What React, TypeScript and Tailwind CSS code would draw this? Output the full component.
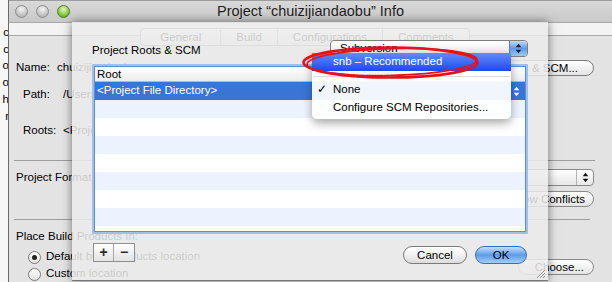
import React from 'react';

const font = "font-['Liberation_Sans',Arial,sans-serif]";

function Arrows({ color = '#111' }: { color?: string }) {
  return (
    <svg width="7" height="11" viewBox="0 0 7 11">
      <path d="M3.5 0.8 L6.3 4.2 H0.7Z" fill={color} />
      <path d="M3.5 10.2 L6.3 6.8 H0.7Z" fill={color} />
    </svg>
  );
}

function TrafficLight({ green }: { green?: boolean }) {
  return (
    <div
      className={
        green
          ? 'w-[13px] h-[13px] rounded-full border border-[#4f7f2a] bg-[radial-gradient(circle_at_50%_30%,#e2f8b8,#8fcb4c_55%,#4c9420)]'
          : 'w-[13px] h-[13px] rounded-full border border-[#8d8d8d] bg-[radial-gradient(circle_at_50%_30%,#f4f4f4,#c8c8c8_55%,#a4a4a4)]'
      }
    />
  );
}

function Radio({ checked }: { checked?: boolean }) {
  return (
    <div className="w-[13px] h-[13px] rounded-full border border-[#7b7b7b] bg-gradient-to-b from-white to-[#e2e2e2] flex items-center justify-center">
      {checked && <div className="w-[5px] h-[5px] rounded-full bg-[#222]" />}
    </div>
  );
}

export default function App() {
  const rows = Array.from({ length: 8 });

  return (
    <div className={`relative w-[612px] h-[282px] overflow-hidden flex bg-[#f7f7f7] text-black ${font}`}>
      {/* window behind, only a sliver */}
      <div className="w-[8px] flex flex-col items-end pt-[24px] text-[11.5px] leading-[16.7px] overflow-hidden">
        {['c', 'c', 'o', 'o', 'h', 'r'].map((c, i) => (
          <span key={i} className="-mr-[1px]">{c}</span>
        ))}
      </div>
      <div className="w-px bg-[#6a6a6a]" />

      {/* project info window */}
      <div className="flex-1 flex flex-col bg-[#e3e3e3]">
        <div className="h-[22px] flex items-center border-t border-[#9c9c9c] bg-gradient-to-b from-[#d8d8d8] to-[#c9c9c9]">
          <div className="flex gap-[8px] pl-[6px] w-[61px]">
            <TrafficLight />
            <TrafficLight />
            <TrafficLight green />
          </div>
          <div className="flex-1 text-center text-[14.5px] text-[#1e1e1e] whitespace-nowrap">
            Project “chuizijiandaobu” Info
          </div>
          <div className="w-[61px]" />
        </div>
        <div className="h-[20px] bg-[#f3f3f3] border-b border-[#a6a6a6] border-t border-t-[#a8a8a8]" />

        <div className="flex flex-col pl-[7px] pr-[18px] text-[11.5px]">
          {/* tabs */}
          <div className="-mt-[8px] h-[18px] flex justify-center">
            <div className="flex h-[18px] rounded-[4px] border border-[#8c8c8c] bg-gradient-to-b from-white to-[#e6e6e6] text-[11.5px] leading-[16px]">
              <div className="px-[19px] border-r border-[#a0a0a0]">General</div>
              <div className="px-[15px] border-r border-[#a0a0a0]">Build</div>
              <div className="px-[15px] border-r border-[#a0a0a0]">Configurations</div>
              <div className="px-[15px]">Comments</div>
            </div>
          </div>

          <div className="mt-[14px] h-[16px] flex items-center justify-between">
            <div className="flex whitespace-nowrap">
              <span className="w-[41px]">Name:</span>
              <span>chuizijiandaobu</span>
            </div>
            <div className="h-[16px] rounded-full border border-[#7d7d7d] bg-gradient-to-b from-white to-[#e4e4e4] pl-[14px] pr-[15px] leading-[14px] whitespace-nowrap">
              Edit Roots &amp; SCM...
            </div>
          </div>
          <div className="mt-[11px] h-[15px] flex items-center pl-[7px] whitespace-nowrap">
            <span className="w-[40px]">Path:</span>
            <span>/Users/apple/Desktop/chuizijiandaobu</span>
          </div>
          <div className="mt-[21px] h-[15px] flex items-center pl-[7px] whitespace-nowrap">
            <span className="w-[40px]">Roots:</span>
            <span>&lt;Project File Directory&gt;</span>
          </div>
          <div className="mt-[22px] -ml-[2px] mr-[-1px] border-t border-[#9e9e9e]" />

          <div className="mt-[8px] h-[17px] flex items-center justify-between">
            <span>Project Format:</span>
            <div className="w-[200px] h-[17px] rounded-[4px] border border-[#8a8a8a] bg-gradient-to-b from-white to-[#e8e8e8] flex items-center">
              <span className="flex-1 pl-[8px] leading-[15px]">Xcode 3.1-compatible</span>
              <div className="w-[17px] h-full border-l border-[#b4b4b4] flex items-center justify-center">
                <Arrows />
              </div>
            </div>
          </div>
          <div className="mt-[5px] h-[16px] flex justify-end">
            <div className="h-[16px] rounded-full border border-[#8a8a8a] bg-gradient-to-b from-white to-[#e4e4e4] pl-[14px] pr-[8px] leading-[14px] whitespace-nowrap">
              Show Conflicts
            </div>
          </div>
          <div className="mt-[12px] -ml-[2px] mr-[4px] border-t border-[#9e9e9e]" />

          <div className="mt-[9px] h-[15px] leading-[15px] whitespace-nowrap">Place Build Products In:</div>
          <div className="flex justify-between">
            <div className="flex flex-col pl-[12px]">
              <div className="mt-[5px] h-[16px] flex items-center gap-[5px] whitespace-nowrap">
                <Radio checked />
                <span>Default build products location</span>
              </div>
              <div className="mt-[1px] h-[16px] flex items-center gap-[5px] whitespace-nowrap">
                <Radio />
                <span>Custom location</span>
              </div>
            </div>
            <div className="mt-[15px] h-[16px] rounded-full border border-[#8a8a8a] bg-gradient-to-b from-white to-[#e4e4e4] pl-[16px] pr-[9px] leading-[14px]">
              Choose...
            </div>
          </div>
        </div>
      </div>

      {/* sheet */}
      <div className="absolute left-[72px] top-[22px] w-[476px] h-[259px] bg-[#ebebeb]/[0.86] border-b border-[#777] shadow-[0_0_9px_rgba(0,0,0,0.5)] flex flex-col px-[20px] text-[11.5px]">
        <div className="mt-[18px] h-[17px] flex justify-between">
          <span className="pt-[4px] leading-[13px]">Project Roots &amp; SCM</span>
          <div className="w-[198px] h-[17px] rounded-[4px] border border-[#7f7f7f] bg-gradient-to-b from-white to-[#e6e6e6] flex overflow-hidden">
            <span className="flex-1 pl-[9px] leading-[15px]">Subversion</span>
            <div className="w-[18px] h-full border-l border-[#4d7cc0] bg-gradient-to-b from-[#c2dbf7] via-[#5f9be6] to-[#9ccaf6] flex items-center justify-center">
              <Arrows color="#10223a" />
            </div>
          </div>
        </div>

        {/* table */}
        <div className="mt-[7px] h-[170px] p-[2px] bg-[#9fc0ec] rounded-[1px]">
          <div className="h-full border border-[#5f8dd2] bg-white flex flex-col overflow-hidden">
            <div className="h-[15px] shrink-0 flex bg-gradient-to-b from-white to-[#ececec] border-b border-[#b9b9b9] leading-[14px]">
              <div className="w-[243px] pl-[2px] border-r border-[#cfcfcf]">Root</div>
              <div className="pl-[3px] text-black">Repository</div>
            </div>
            <div className="h-[18px] shrink-0 flex items-center bg-[#3a75d6] text-white">
              <span className="flex-1 pl-[2px]">&lt;Project File Directory&gt;</span>
              <div className="pr-[5px]">
                <Arrows color="#ffffff" />
              </div>
            </div>
            {rows.map((_, i) => (
              <div key={i} className={i % 2 === 0 ? 'h-[18px] shrink-0 bg-[#edf3fe]' : 'h-[18px] shrink-0 bg-white'} />
            ))}
          </div>
        </div>

        <div className="mt-[9px] flex justify-between">
          <div className="ml-[1px] flex h-[19px] border border-[#8f8f8f] bg-gradient-to-b from-white to-[#e2e2e2] text-[14px] font-bold leading-[17px] text-[#2a2a2a]">
            <div className="w-[20px] text-center border-r border-[#a5a5a5]">+</div>
            <div className="w-[20px] text-center">−</div>
          </div>
          <div className="mt-[3px] flex gap-[8px] pr-[1px]">
            <div className="w-[64px] h-[18px] rounded-full border border-[#7a7a7a] bg-gradient-to-b from-white via-[#f1f1f1] to-[#dcdcdc] text-center leading-[16px]">
              Cancel
            </div>
            <div className="w-[52px] h-[18px] rounded-full border border-[#3f6db5] bg-gradient-to-b from-[#c6ddf9] via-[#5d9be8] to-[#a3cff9] text-center leading-[16px]">
              OK
            </div>
          </div>
        </div>

        <svg className="absolute right-[2px] bottom-[1px]" width="11" height="11" viewBox="0 0 11 11">
          <path d="M10 2 L2 10 M10 5 L5 10 M10 8 L8 10" stroke="#8a8a8a" strokeWidth="1" />
          <path d="M10 3 L3 10 M10 6 L6 10" stroke="#ffffff" strokeWidth="0.8" />
        </svg>
      </div>

      {/* open popup menu */}
      <div className="absolute left-[312px] top-[53px] w-[199px] flex flex-col bg-white/[0.93] rounded-b-[5px] shadow-[0_4px_10px_rgba(0,0,0,0.35)] pb-[3px] text-[11.5px]">
        <div className="h-[18px] flex items-center pl-[21px] text-white bg-gradient-to-b from-[#6489f8] to-[#1d47ef]">
          snb – Recommended
        </div>
        <div className="h-[10px] flex items-center px-[1px]">
          <div className="w-full border-t border-[#dadada]" />
        </div>
        <div className="h-[18px] flex items-center">
          <span className="w-[21px] pl-[5px]">✓</span>
          <span>None</span>
        </div>
        <div className="h-[17px] flex items-center pl-[21px]">Configure SCM Repositories...</div>
      </div>

      {/* red marker ellipse */}
      <svg className="absolute left-0 top-0 pointer-events-none" width="612" height="282" viewBox="0 0 612 282">
        <ellipse cx="390.5" cy="62.5" rx="87" ry="15" fill="none" stroke="#e4131b" strokeWidth="2.6" />
        <ellipse cx="392" cy="62" rx="85" ry="13.5" fill="none" stroke="#e4131b" strokeWidth="1.8" transform="rotate(-1.5 392 62)" />
      </svg>
    </div>
  );
}
